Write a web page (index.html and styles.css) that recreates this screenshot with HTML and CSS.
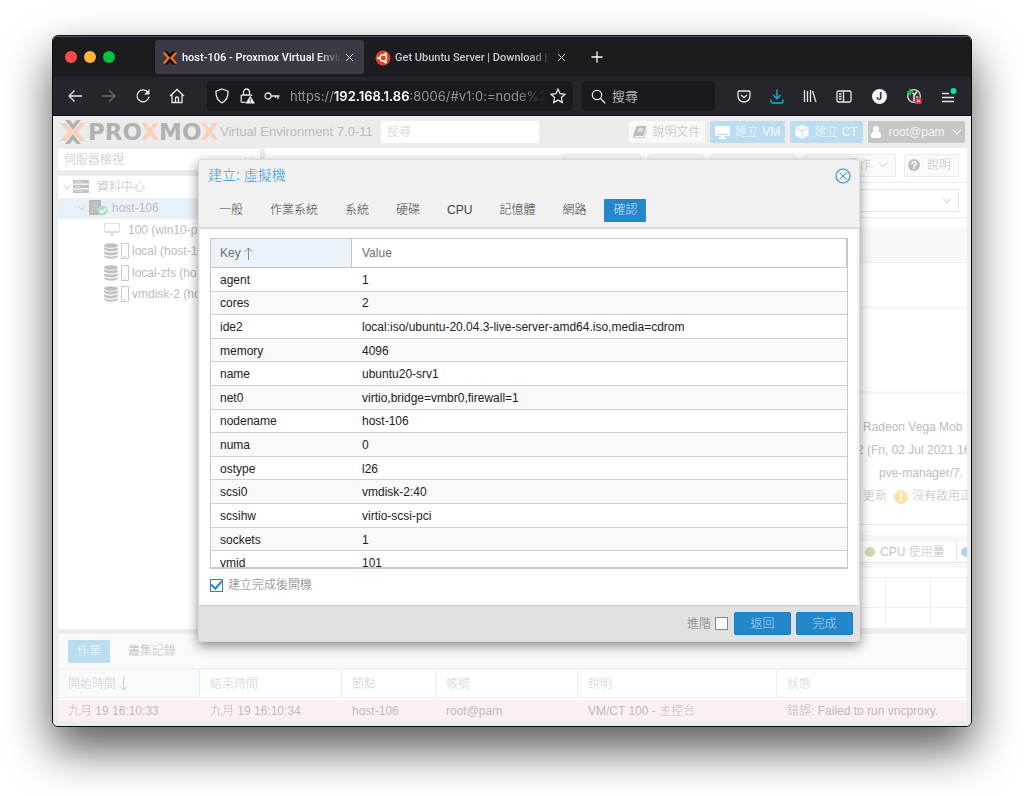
FILE: index.html
```html
<!DOCTYPE html>
<html lang="zh-Hant">
<head>
<meta charset="utf-8">
<title>host-106 - Proxmox Virtual Environment</title>
<link rel="stylesheet" href="styles.css">
</head>
<body>
<div class="window">
  <div class="tabbar">
    <div class="lights"><i class="light red"></i><i class="light yellow"></i><i class="light green"></i></div>
    <div class="btab active">
      <svg width="16" height="14" viewBox="0 0 16 14"><path d="M2.500 .5h3L8 3.500l2.500-3h3L8 6.500zM2.500 13.500h3L8 10.500l2.500 3h3L8 7.500z" fill="#000"/><path d="M.5 1.500h3L8 7l-4.500 5.500h-3L5 7zM15.500 1.500h-3L8 7l4.500 5.500h3L11 7z" fill="#e8711c"/></svg>
      <span class="btitle">host-106 - Proxmox Virtual Envir</span>
      <button class="x" aria-label="關閉分頁"><svg width="9" height="9" viewBox="0 0 9 9"><path d="M1 1l7 7M8 1L1 8" stroke="#d8d8dc" fill="none"/></svg></button>
    </div>
    <div class="btab">
      <svg width="16" height="16" viewBox="0 0 16 16"><circle cx="8" cy="8" r="7.500" fill="#dd4322"/><circle cx="8.300" cy="8" r="3.200" fill="none" stroke="#fff" stroke-width="1.400"/><circle cx="3.500" cy="8" r="1.300" fill="#fff"/><circle cx="10.600" cy="3.800" r="1.300" fill="#fff"/><circle cx="10.600" cy="12.200" r="1.300" fill="#fff"/></svg>
      <span class="btitle">Get Ubuntu Server | Download |</span>
      <button class="x" aria-label="關閉分頁"><svg width="9" height="9" viewBox="0 0 9 9"><path d="M1 1l7 7M8 1L1 8" stroke="#d8d8dc" fill="none"/></svg></button>
    </div>
    <button class="x newtab" aria-label="新分頁"><svg width="12" height="12" viewBox="0 0 12 12"><path d="M6 .5v11M.5 6h11" stroke="#fbfbfe" stroke-width="1.300"/></svg></button>
  </div>
  <div class="navbar">
    <div class="navbtns">
      <button class="x" aria-label="上一頁"><svg width="16" height="14" viewBox="0 0 16 14"><path d="M15 7H2M7.500 1.500L2 7l5.500 5.500" class="s"/></svg></button>
      <button class="x dim" aria-label="下一頁"><svg width="16" height="14" viewBox="0 0 16 14"><path d="M1 7h13M8.500 1.500L14 7l-5.500 5.500" class="s"/></svg></button>
      <button class="x" aria-label="重新載入"><svg width="16" height="16" viewBox="0 0 16 16"><path d="M13 4.500A6 6 0 1 0 14 8.500" class="s"/><path d="M14.500 1v5.500H9z" fill="#e6e6ea"/></svg></button>
      <button class="x" aria-label="首頁"><svg width="16" height="16" viewBox="0 0 16 16"><path d="M1 8l7-6.500L15 8M3 6.500v8h10v-8M6.500 14.500v-4a1.500 1.500 0 0 1 3 0v4" class="s"/></svg></button>
    </div>
    <div class="urlbar">
      <svg width="16" height="16" viewBox="0 0 16 16"><path d="M8 1l6 2.200c.3 5-1.500 9.300-6 11.800C3.500 12.500 1.700 8.200 2 3.200z" class="s"/></svg>
      <svg width="16" height="16" viewBox="0 0 16 16"><path d="M4.500 7V4a3 3 0 0 1 6 0v3M6.500 14.300H3.200a1 1 0 0 1-1-1V8a1 1 0 0 1 1-1h8.600a1 1 0 0 1 1 1" class="s"/><path d="M11.200 7.800L16 15.500H6.500z" fill="#fbfbfe"/><path d="M11.200 10.500v2.200M11.200 13.500v1" stroke="#1c1b22"/></svg>
      <svg width="16" height="10" viewBox="0 0 16 10"><circle cx="4" cy="5" r="3" class="s"/><path d="M7 5h8.500M14 5v3M11.500 5v2" class="s"/></svg>
      <span class="url">https://<b>192.168.1.86</b>:8006/#v1:0:=node%2</span>
      <svg width="16" height="16" viewBox="0 0 16 16"><path d="M8 1.200l2.100 4.500 4.900.6-3.600 3.300.9 4.900L8 12.100l-4.300 2.400.9-4.900L1 6.300l4.900-.6z" class="s"/></svg>
    </div>
    <label class="findbar">
      <svg width="15" height="15" viewBox="0 0 15 15"><circle cx="6" cy="6" r="4.700" class="s"/><path d="M9.500 9.500l4.700 4.700" class="s"/></svg>
      <input class="find" type="text" placeholder="搜尋" aria-label="搜尋網頁">
    </label>
    <div class="exts">
      <svg width="14" height="13" viewBox="0 0 14 13"><path d="M1 2a1 1 0 0 1 1-1h10a1 1 0 0 1 1 1v4a6 6 0 0 1-12 0zM4 5l3 2.700L10 5" class="s"/></svg>
      <svg width="14" height="15" viewBox="0 0 14 15"><path d="M7 .5v9M3.300 6L7 9.700 10.700 6M1 10.500v2a1.500 1.500 0 0 0 1.500 1.500h9a1.500 1.500 0 0 0 1.500-1.500v-2" fill="none" stroke="#00b8d9" stroke-width="1.400"/></svg>
      <svg width="14" height="14" viewBox="0 0 14 14"><path d="M1.500 1v12M4.500 2v11M7.500 1v12M9.500 2l3.500 11" class="s"/></svg>
      <svg width="16" height="13" viewBox="0 0 16 13"><rect x="1" y="1" width="14" height="11" rx="1.500" class="s"/><path d="M7.500 1v11M3 4h2.500M3 6.500h2.500M3 9h2.500" class="s"/></svg>
      <span class="avatar">J</span>
      <svg width="16" height="16" viewBox="0 0 16 16"><circle cx="8" cy="8" r="6.300" fill="#333" stroke="#d8d8d8" stroke-width="1.300"/><path d="M5 4l3 2v7M11 3.500L8.500 7M11 8v4" stroke="#e8e8e8" stroke-width="1.500" fill="none"/><path d="M4 1v6M1 4h6" stroke="#12b53a" stroke-width="2"/><rect x="9.500" y="10" width="6" height="6" fill="#e22340"/><path d="M11 11.500l3 3M14 11.500l-3 3" stroke="#fff"/></svg>
      <svg width="16" height="16" viewBox="0 0 16 16"><path d="M1 5.500h7M1 9.500h12M1 13.500h12" class="s"/><circle cx="12.500" cy="3" r="3" fill="#00e3a5"/></svg>
    </div>
  </div>

  <div class="app">
    <header class="top">
      <svg class="mark" width="26" height="24" viewBox="0 0 26 24"><path d="M0 3h5.500L14 12 5.500 21H0l8.500-9zM26 3h-5.500L12 12l8.500 9H26l-8.500-9z" fill="#fad0bb"/><path d="M5 0h4.500L13 4l3.500-4H21l-8 10zM5 24h4.500L13 20l3.500 4H21l-8-10z" fill="#b2b2b2"/></svg>
      <span class="brand">PRO<em>X</em>MO<em>X</em></span>
      <span class="version">Virtual Environment 7.0-11</span>
      <input class="search" type="text" placeholder="搜尋" aria-label="搜尋">
      <div class="topbtns">
        <button class="btn doc"><svg width="14" height="12" viewBox="0 0 14 12"><path d="M4 0h9.500L10.500 10H1.800c-.4.900.2 1.200.8 1.200h8.500l2.500-8 .2 1L11.500 12H2C.5 12-.2 11 .2 9.500L3 1z" fill="#bdbdbd"/><path d="M5.500 3h5M5 5h5" stroke="#fff"/></svg>說明文件</button>
        <button class="btn blue"><svg width="15" height="13" viewBox="0 0 15 13"><path d="M1 0h13a1 1 0 0 1 1 1v8a1 1 0 0 1-1 1H9v1.500h2V13H4v-1.500h2V10H1a1 1 0 0 1-1-1V1a1 1 0 0 1 1-1zm.5 8v1h12v-1z" fill="#fff" fill-rule="evenodd"/></svg>建立 VM</button>
        <button class="btn blue ct"><svg width="14" height="14" viewBox="0 0 14 14"><path d="M7 0l6.500 2.500v8L7 14 .5 10.500v-8z" fill="#fff"/><path d="M1.500 3.500L7 5.800l5.500-2.300M7 6v7" stroke="#bcdcf0" fill="none"/></svg>建立 CT</button>
        <button class="btn user"><svg width="10" height="12" viewBox="0 0 10 12"><circle cx="5" cy="3" r="3" fill="#fff"/><path d="M0 10c0-3 1-4.500 2.500-4.500 1.500 1 3.500 1 5 0C9 5.500 10 7 10 10c0 1.500-1 2-2 2H2c-1 0-2-.5-2-2z" fill="#fff"/></svg>root@pam<svg width="10" height="6" viewBox="0 0 10 6"><path d="M1 .5l4 4.500L9 .5" fill="none" stroke="#fff"/></svg></button>
      </div>
    </header>

    <div class="work">
      <aside class="side">
        <div class="viewsel">
          <select aria-label="檢視"><option>伺服器檢視</option></select>
          <svg width="10" height="6" viewBox="0 0 10 6"><path d="M1 .5l4 4.500L9 .5" class="g"/></svg>
        </div>
        <div class="treebox">
        <ul class="tree">
          <li class="l0"><svg width="8" height="6" viewBox="0 0 8 6"><path d="M.5 1L4 5l3.500-4" class="g"/></svg><svg width="16" height="13" viewBox="0 0 16 13"><path d="M0 0h16v3.500H0zM0 4.700h16v3.500H0zM0 9.500h16V13H0z" fill="#c0c0c0"/><path d="M2 1.700h7M2 6.500h5M2 11.200h7" stroke="#e4e4e4"/></svg><span>資料中心</span></li>
          <li class="l1 sel"><svg width="8" height="6" viewBox="0 0 8 6"><path d="M.5 1L4 5l3.500-4" class="g"/></svg><svg width="19" height="16" viewBox="0 0 19 16"><path d="M0 0h12v15H0z" fill="#b8b8b8"/><path d="M2.500 3h7M2.500 6h7M2.500 9h7M2.500 12h3" stroke="#dfe5ea" stroke-dasharray="1.500 1"/><circle cx="13.500" cy="10.500" r="5" fill="#a9e3c4"/><path d="M11 10.500l2 2 3.500-4" stroke="#fff" stroke-width="1.500" fill="none"/></svg><span>host-106</span></li>
          <li class="l2"><svg width="16" height="13" viewBox="0 0 16 13"><path d="M.5.500h15v9H.5z" fill="none" stroke="#e2e2e2"/><path d="M1 8h14v2H1zM6.500 10h3l1 2.500h-5z" fill="#dfdfdf"/></svg><span>100 (win10-p</span></li>
          <li class="l2 st"><svg width="14" height="16" viewBox="0 0 14 16"><ellipse cx="7" cy="2.500" rx="6.800" ry="2.300" fill="#c0c0c0"/><path d="M.2 4c2 2.300 11.600 2.300 13.600 0v2.500c-2 2.500-11.600 2.500-13.600 0zM.2 8c2 2.300 11.600 2.300 13.600 0v2.500c-2 2.500-11.600 2.500-13.600 0zM.2 12c2 2.300 11.600 2.300 13.600 0v1.500c-2 3-11.600 3-13.600 0z" fill="#c0c0c0"/></svg><svg width="8" height="16" viewBox="0 0 8 16"><path d="M.5.500h7v15h-7zM3 13.500h2" class="g"/></svg><span>local (host-1</span></li>
          <li class="l2 st"><svg width="14" height="16" viewBox="0 0 14 16"><ellipse cx="7" cy="2.500" rx="6.800" ry="2.300" fill="#c0c0c0"/><path d="M.2 4c2 2.300 11.600 2.300 13.600 0v2.500c-2 2.500-11.600 2.500-13.600 0zM.2 8c2 2.300 11.600 2.300 13.600 0v2.500c-2 2.500-11.600 2.500-13.600 0zM.2 12c2 2.300 11.600 2.300 13.600 0v1.500c-2 3-11.600 3-13.600 0z" fill="#c0c0c0"/></svg><svg width="8" height="16" viewBox="0 0 8 16"><path d="M.5.500h7v15h-7zM3 13.500h2" class="g"/></svg><span>local-zfs (ho</span></li>
          <li class="l2 st"><svg width="14" height="16" viewBox="0 0 14 16"><ellipse cx="7" cy="2.500" rx="6.800" ry="2.300" fill="#c0c0c0"/><path d="M.2 4c2 2.300 11.600 2.300 13.600 0v2.500c-2 2.500-11.600 2.500-13.600 0zM.2 8c2 2.300 11.600 2.300 13.600 0v2.500c-2 2.500-11.600 2.500-13.600 0zM.2 12c2 2.300 11.600 2.300 13.600 0v1.500c-2 3-11.600 3-13.600 0z" fill="#c0c0c0"/></svg><svg width="8" height="16" viewBox="0 0 8 16"><path d="M.5.500h7v15h-7zM3 13.500h2" class="g"/></svg><span>vmdisk-2 (ho</span></li>
        </ul>
        </div>
      </aside>

      <main class="main">
        <div class="mtools">
          <span class="mbtn w78"></span><span class="mbtn w54"></span><span class="mbtn w85"></span>
          <button class="mbtn w92">操作<svg width="10" height="6" viewBox="0 0 10 6"><path d="M1 .5l4 4.500L9 .5" class="g"/></svg></button>
          <button class="mbtn help"><svg width="12" height="12" viewBox="0 0 12 12"><circle cx="6" cy="6" r="6" fill="#c0c0c0"/><path d="M4 4.700C4 2.300 8 2.300 8 4.500 8 6 6 5.800 6 7.500M6 8.300v1.500" stroke="#fff" stroke-width="1.500" fill="none"/></svg>說明</button>
        </div>
        <div class="mcombo"><div class="combo"><svg width="10" height="6" viewBox="0 0 10 6"><path d="M1 .5l4 4.500L9 .5" class="g"/></svg></div></div>
        <div class="band"></div>
        <div class="blk1"></div>
        <div class="blk2"></div>
        <div class="status">
          <div class="info">
            <p>Radeon Vega Mob</p>
            <p class="out">2 (Fri, 02 Jul 2021 16</p>
            <p class="in">pve-manager/7.</p>
            <p class="upd">更新 <i class="warn">!</i>沒有啟用正</p>
          </div>
        </div>
        <div class="legend"><div class="keys"><span class="key"><i class="dot olive"></i>CPU 使用量</span><span class="key"><i class="dot sky"></i></span></div></div>
        <div class="chart"><div class="gridlines"><i></i><i></i><i></i><i></i><i></i><i></i></div></div>
      </main>
    </div>

    <section class="log">
      <div class="logtabs"><button class="ltab on">作業</button><button class="ltab">叢集記錄</button></div>
      <table>
        <colgroup><col class="c142"><col class="c142"><col class="c94"><col class="c142"><col class="c199"><col></colgroup>
        <thead><tr><th class="sorted">開始時間<svg width="9" height="14" viewBox="0 0 9 14"><path d="M4.500 0v13M.5 9l4 4 4-4" class="g"/></svg></th><th>結束時間</th><th>節點</th><th>帳號</th><th>說明</th><th>狀態</th></tr></thead>
        <tbody><tr><td>九月 19 16:10:33</td><td>九月 19 16:10:34</td><td>host-106</td><td>root@pam</td><td>VM/CT 100 - 主控台</td><td>錯誤: Failed to run vncproxy.</td></tr></tbody>
      </table>
    </section>

    <div class="dialog" role="dialog" aria-label="建立: 虛擬機">
      <div class="dhead">
        <div class="dtitle"><h1>建立: 虛擬機</h1>
          <button class="x" aria-label="關閉"><svg width="16" height="16" viewBox="0 0 16 16"><circle cx="8" cy="8" r="7" fill="none" stroke="#3a8fc8" stroke-width="1.200"/><path d="M4.500 4.500l7 7M11.500 4.500l-7 7" stroke="#3a8fc8"/></svg></button></div>
        <div class="dtabs"><button>一般</button><button>作業系統</button><button>系統</button><button>硬碟</button><button>CPU</button><button>記憶體</button><button>網路</button><button class="on">確認</button></div>
      </div>
      <div class="dbody">
        <div class="gridbox">
          <table class="conf">
            <colgroup><col class="c141"><col></colgroup>
            <thead><tr><th class="sorted">Key<svg width="9" height="13" viewBox="0 0 9 13"><path d="M4.500 13V1M.5 5l4-4 4 4" fill="none" stroke="#8a8a8a"/></svg></th><th>Value</th></tr></thead>
            <tbody>
              <tr><td>agent</td><td>1</td></tr>
              <tr><td>cores</td><td>2</td></tr>
              <tr><td>ide2</td><td>local:iso/ubuntu-20.04.3-live-server-amd64.iso,media=cdrom</td></tr>
              <tr><td>memory</td><td>4096</td></tr>
              <tr><td>name</td><td>ubuntu20-srv1</td></tr>
              <tr><td>net0</td><td>virtio,bridge=vmbr0,firewall=1</td></tr>
              <tr><td>nodename</td><td>host-106</td></tr>
              <tr><td>numa</td><td>0</td></tr>
              <tr><td>ostype</td><td>l26</td></tr>
              <tr><td>scsi0</td><td>vmdisk-2:40</td></tr>
              <tr><td>scsihw</td><td>virtio-scsi-pci</td></tr>
              <tr><td>sockets</td><td>1</td></tr>
              <tr><td>vmid</td><td>101</td></tr>
            </tbody>
          </table>
        </div>
        <label class="check"><input type="checkbox" checked>建立完成後開機</label>
      </div>
      <div class="dfoot">
        <label class="adv">進階<input type="checkbox"></label>
        <button class="act">返回</button><button class="act">完成</button>
      </div>
    </div>
  </div>
</div>
</body>
</html>
```

FILE: styles.css
```css
* { box-sizing: border-box; }
body {
  margin: 0; min-height: 100vh; padding: 35px 52px 69px; display: flex;
  background: #fff; color: #bbb;
  font: 300 12px/16px "Liberation Sans", "Noto Sans CJK TC", sans-serif;
}
svg { display: block; flex: none; }
button { font: inherit; color: inherit; border: 0; background: none; padding: 0; white-space: nowrap; }
input, select { font: inherit; color: inherit; margin: 0; }
.s { fill: none; stroke: #e6e6ea; stroke-width: 1.3; }
.g { fill: none; stroke: #c8c8c8; }

.window {
  flex: 1; min-width: 0; display: flex; flex-direction: column;
  border: 1px solid #0c0c0e; border-radius: 6px; overflow: clip; background: #ececec;
  box-shadow: 0 22px 46px rgba(0,0,0,.66);
}
.tabbar {
  height: 41px; display: flex; align-items: center; background: #1c1b20;
  border-top: 1px solid #55555a; font: 500 11px/16px Roboto, sans-serif; color: #c9c9cf;
}
.lights { display: flex; gap: 7px; padding-left: 12px; width: 102px; }
.light { width: 12px; height: 12px; border-radius: 50%; }
.red { background: #fe4a48; }
.yellow { background: #fdb43a; }
.green { background: #06c440; }
.btab { display: flex; align-items: center; width: 209px; height: 34px; padding: 1px 10px 0 7px; border-radius: 3px; gap: 4px; }
.btab + .btab { margin-left: 4px; width: 208px; padding-right: 10px; }
.active { background: #3c3944; color: #fbfbfe; }
.btitle {
  flex: 1; min-width: 0; overflow: hidden; white-space: nowrap;
  mask-image: linear-gradient(to right, #000 85%, transparent);
}
.x { display: flex; }
.newtab { margin-left: 15px; }

.navbar { height: 39px; display: flex; align-items: center; background: #26252b; border-bottom: 1px solid #0c0c0e; }
.navbtns { display: flex; align-items: center; gap: 18px; padding: 0 22px 0 14px; }
.dim { opacity: .35; }
.urlbar { display: flex; align-items: center; width: 366px; height: 30px; padding: 0 7px; gap: 9px; background: #1a191e; border-radius: 4px; }
.url {
  flex: 1; min-width: 0; overflow: hidden; white-space: nowrap; margin: 0 -6px 0 1px;
  font: 400 13px/18px Inter, sans-serif; color: #929298;
  mask-image: linear-gradient(to right, #000 88%, transparent);
}
.url b { color: #fbfbfe; font-weight: 600; }
.findbar { display: flex; align-items: center; gap: 6px; width: 133px; height: 30px; margin-left: 9px; padding-left: 9px; background: #1a191e; border-radius: 4px; }
.find { width: 90px; border: 0; padding: 0; background: none; font: 400 13px/18px "Noto Sans CJK TC", sans-serif; }
.find::placeholder { color: #b4b4b9; opacity: 1; }
.exts { flex: 1; display: flex; align-items: center; justify-content: space-between; padding: 0 14px 0 22px; }
.avatar { width: 15px; height: 15px; border-radius: 50%; background: #f6f6f8; color: #26252b; font: 700 10px/15px Inter, sans-serif; text-align: center; }

.app { position: relative; flex: 1; display: flex; flex-direction: column; padding: 0 4px 5px 5px; background: #ececec; }
.top { display: flex; align-items: center; height: 32px; padding: 0 2px; }
.mark { margin-right: 2px; }
.brand { width: 132px; font: 700 23px/24px "DejaVu Sans", sans-serif; color: #b2b2b2; }
.brand em { font-style: normal; color: #fad0bb; }
.version { width: 161px; font-size: 13px; white-space: nowrap; }
.search { width: 158px; height: 22px; border: 0; padding: 0 6px; background: #fff; }
.search::placeholder { color: #d6d6d6; opacity: 1; }
.topbtns { display: flex; gap: 5px; margin-left: auto; }
.btn { display: flex; align-items: center; justify-content: center; gap: 6px; height: 22px; padding: 0; border-radius: 2px; }
.doc { background: #f8f8f8; width: 76px; gap: 5px; }
.blue { background: #bcdcf0; color: #f2f9fd; width: 75px; gap: 5px; }
.ct { width: 73px; }
.user { background: #c5c7c6; color: #f4f4f4; width: 97px; gap: 7px; }

.work { flex: 1; display: grid; grid-template-columns: 202px minmax(0, 1fr); gap: 5px; margin-bottom: 5px; }
.side { display: flex; flex-direction: column; gap: 6px; padding-top: 1px; }
.viewsel { display: flex; align-items: center; height: 21px; padding: 0 6px; background: #fff; }
.viewsel select { flex: 1; appearance: none; border: 0; padding: 0; background: none; color: #c4c4c4; }
.treebox { flex: 1; background: #fff; }
.tree { list-style: none; margin: 0; padding: 0; height: 129px; display: grid; grid-auto-rows: 1fr; }
.tree li { display: flex; align-items: center; white-space: nowrap; overflow: hidden; color: #bcbcbc; }
.l0 { padding-left: 5px; }
.l0 svg + svg { margin: 0 8px 0 2px; }
.l1 { padding-left: 20px; }
.l1 svg + svg { margin: 0 4px 0 3px; }
.l2 { padding-left: 46px; gap: 8px; }
.st { gap: 3px; }
.tree .sel { background: #e8f1f8; }

.main { display: flex; flex-direction: column; background: #fff; min-width: 0; }
.mtools { display: flex; align-items: center; justify-content: flex-end; gap: 8px; height: 35px; padding-right: 8px; border-bottom: 1px solid #ececec; }
.mbtn { display: flex; align-items: center; justify-content: flex-end; gap: 7px; height: 23px; padding: 0 7px; border: 1px solid #ebebeb; border-radius: 2px; background: #fafafa; color: #c4c4c4; }
.w78 { width: 78px; } .w54 { width: 54px; } .w85 { width: 85px; } .w92 { width: 92px; }
.help { width: 55px; }
.mcombo { height: 35px; padding: 6px 8px 0; border-bottom: 1px solid #ececec; }
.combo { display: flex; align-items: center; justify-content: flex-end; height: 23px; padding-right: 6px; border: 1px solid #e6e6e6; }
.band { height: 35px; margin-top: 10px; background: #f8f8f8; border-bottom: 1px solid #efefef; }
.blk1 { height: 46px; border-bottom: 3px solid #f7f7f7; }
.blk2 { height: 85px; border-bottom: 3px solid #f7f7f7; }
.status { height: 131px; border-bottom: 1px solid #ebebeb; padding-top: 22px; }
.info { width: 110px; margin-left: auto; padding-left: 6px; overflow: hidden; white-space: nowrap; color: #bcbcbc; }
.info p { display: flex; align-items: center; margin: 0; height: 23px; line-height: 23px; }
.info .out { margin-left: -6px; }
.info .in { padding-left: 16px; }
.info .upd { gap: 4px; }
.warn { flex: none; width: 14px; height: 14px; margin-left: 3px; border-radius: 50%; background: #fbe3a6; color: #fff; font: 700 12px/14px "Liberation Sans", sans-serif; text-align: center; }
.legend { height: 33px; margin-top: 10px; border-top: 5px solid #f8f8f8; border-bottom: 5px solid #f8f8f8; }
.keys { width: 106px; height: 23px; margin-left: auto; display: flex; overflow: hidden; border-bottom: 1px solid #e6e6e6; border-top: 1px solid #efefef; }
.key { display: flex; align-items: center; gap: 5px; flex: none; width: 96px; padding-left: 4px; border-right: 1px solid #e6e6e6; color: #c4c4c4; }
.dot { width: 10px; height: 10px; border-radius: 50%; }
.olive { background: #d0d9ae; }
.sky { background: #b4d2ea; }
.chart { flex: 1; padding-top: 9px; }
.gridlines { width: 106px; height: 100%; margin-left: auto; display: grid; grid-template-columns: 25px 45px 1fr; grid-template-rows: 30px 1fr; border-top: 1px solid #efefef; }
.gridlines i { border-right: 1px solid #efefef; border-bottom: 1px solid #efefef; }

.log { background: #fff; }
.logtabs { display: flex; align-items: center; gap: 9px; height: 36px; padding-left: 10px; background: #fafafa; border-bottom: 2px solid #f2f2f2; }
.ltab { height: 23px; padding: 0 9px; color: #bcbcbc; border-radius: 1px; }
.ltab.on { background: #bcdcf0; color: #eef7fc; }
table { width: 100%; table-layout: fixed; border-collapse: separate; border-spacing: 0; }
th, td { text-align: left; font-weight: 300; padding: 0 10px; white-space: nowrap; overflow: hidden; }
th svg { display: inline-block; vertical-align: middle; margin-left: 3px; }
.c141 { width: 141px; } .c142 { width: 142px; } .c94 { width: 94px; } .c199 { width: 199px; }
.log th { height: 28px; color: #d0d0d0; border-right: 1px solid #ededed; border-bottom: 1px solid #ededed; }
.log .sorted { background: #f7fbfe; }
.log td { height: 23px; background: #fbf0f1; border-top: 2px solid #fff; color: #c0baba; }

.dialog {
  position: absolute; top: 43px; left: 145px; right: 111px;
  border: 1px solid #dcdcdc; border-radius: 3px; background: #f1f1f1;
  box-shadow: 0 4px 12px rgba(0,0,0,.45); color: #333; overflow: clip;
}
.dhead { padding: 7px 8px 0 9px; height: 69px; border-bottom: 2px solid #dcdcdc; }
.dtitle { display: flex; justify-content: space-between; align-items: center; height: 17px; }
h1 { margin: 0; font: 300 14px/17px "Liberation Sans", "Noto Sans CJK TC", sans-serif; color: #3a97d4; }
.dtabs { display: flex; gap: 9px; margin: 15px 0 0 2px; }
.dtabs button { height: 23px; padding: 0 9px; color: #444; line-height: 23px; }
.dtabs .on { background: #2487ca; color: #cfe6f5; border-radius: 1px; }
.dbody { padding: 9px 9px 11px 10px; background: #fff; margin: 0 2px 0 1px; border-bottom: 1px solid #ccc; }
.gridbox { height: 331px; overflow: hidden; border: 1px solid #c9c9c9; border-bottom-width: 2px; }
.conf { height: 336px; color: #222; }
.conf th, .conf td { padding-left: 9px; }
.conf td + td, .conf th + th { padding-left: 10px; }
.conf th { height: 29px; border-bottom: 1px solid #c4c4c4; color: #707070; }
.conf th:last-child { border-right: 1px solid #c4c4c4; }
.conf .sorted { background: #eaf3fa; border-right: 1px solid #c4c4c4; }
.conf td { border-bottom: 1px solid #cfcfcf; padding-top: 1px; line-height: 16px; }
.conf tbody tr:nth-child(even) { background: #f9f9f9; }
.check { display: flex; align-items: center; gap: 5px; margin-top: 7px; height: 18px; color: #777; }
input[type="checkbox"] { appearance: none; width: 13px; height: 13px; border: 1px solid #888; background: #fff; }
.check input { border-color: #2487ca; display: grid; place-items: center; }
.check input:checked::before { content: ""; width: 9px; height: 5px; border: solid #2487ca; border-width: 0 0 2px 2px; rotate: -48deg; margin-bottom: 3px; }
.dfoot { display: flex; align-items: center; justify-content: flex-end; gap: 5px; height: 35px; padding-right: 6px; background: #e1e1e1; }
.adv { display: flex; align-items: center; gap: 4px; margin-right: 1px; color: #777; }
.act { width: 57px; height: 23px; background: #2487ca; color: #b9daf0; border-radius: 2px; border: 1px solid #1b7cc0; }
```
